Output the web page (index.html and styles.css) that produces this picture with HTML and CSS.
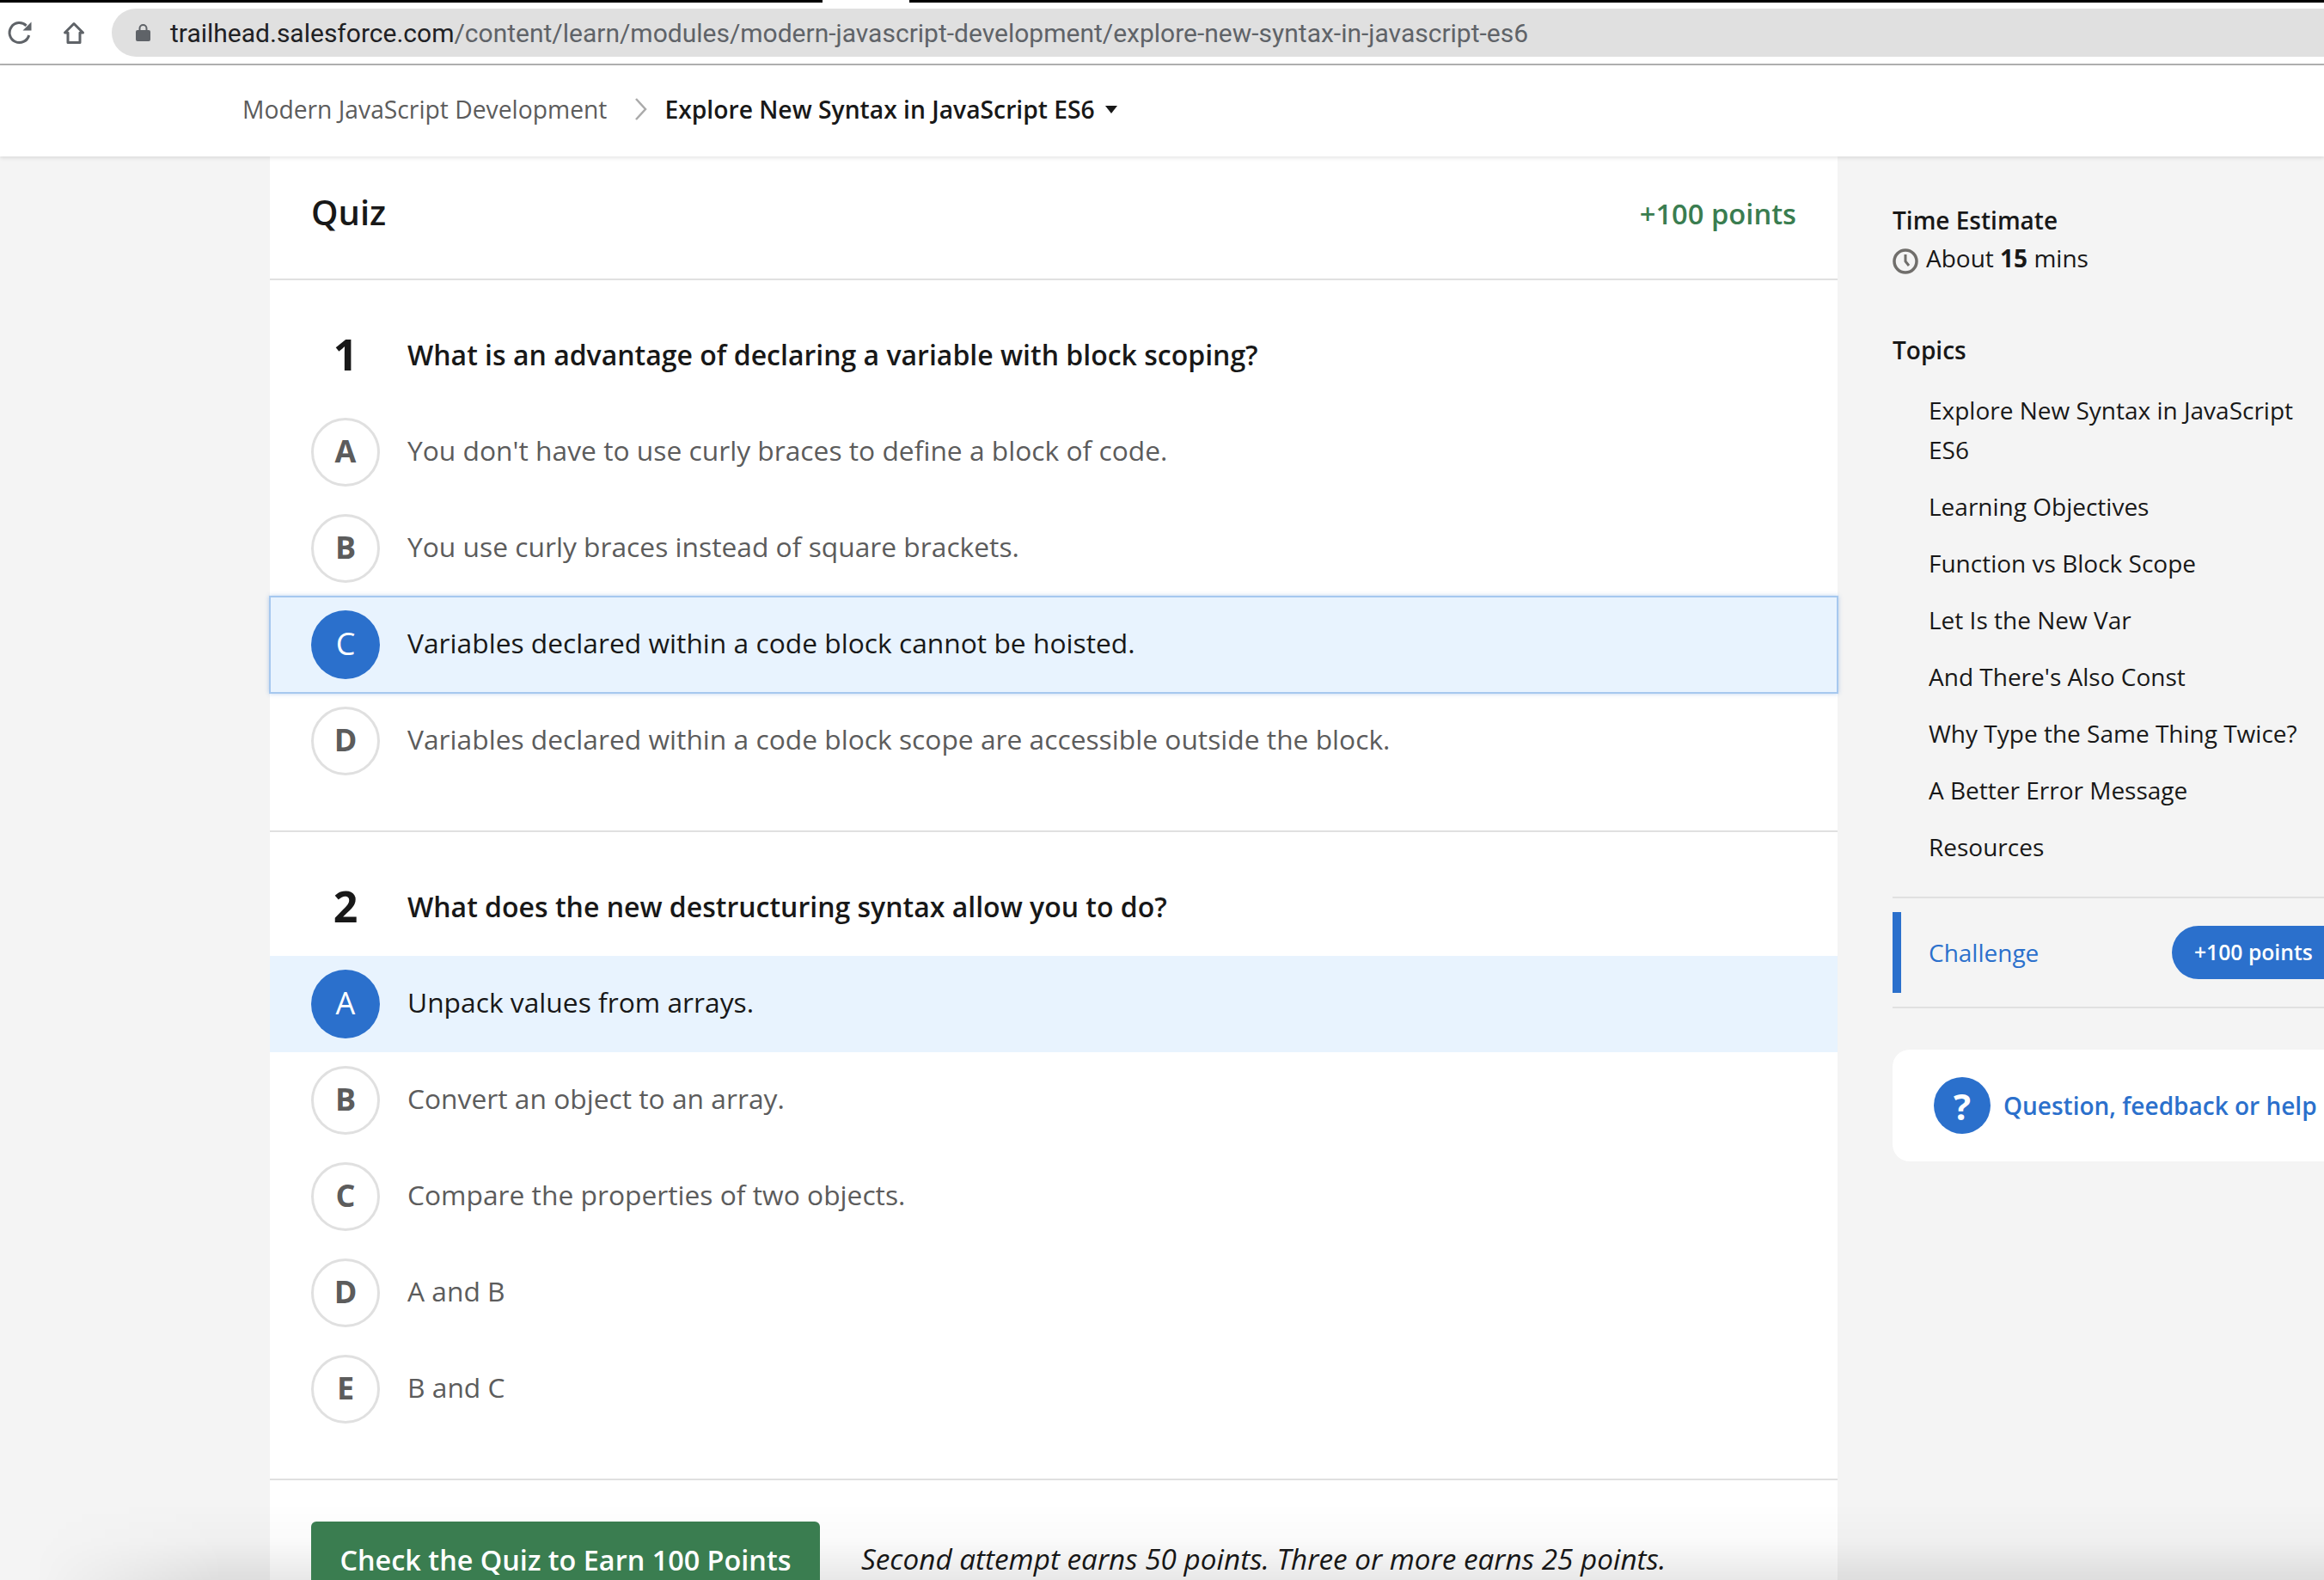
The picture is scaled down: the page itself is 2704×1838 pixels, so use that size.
FILE: index.html
```html
<!doctype html>
<html>
<head>
  <title>Explore New Syntax in JavaScript ES6</title>
  <link rel="stylesheet" href="styles.css">
</head>
<body>
  <div class="browser">
    <div class="tabstrip">
      <div class="tabstrip-left"></div>
      <div class="tabstrip-right"></div>
    </div>
    <div class="toolbar">
      <svg class="reload" width="30" height="30" viewBox="0 0 30 30" fill="none" stroke="#5f6368" stroke-width="3">
        <path d="M22.600 6.800A11.500 11.500 0 1 0 25.700 18"/>
        <path d="M28.500 2.500v10h-10z" fill="#5f6368" stroke="none"/>
      </svg>
      <svg class="home" width="30" height="30" viewBox="0 0 30 30" fill="none" stroke="#5f6368" stroke-width="3" stroke-linejoin="round">
        <path d="M14 4.500 3.500 15H7v11.500h14V15h3.500z"/>
      </svg>
      <div class="address">
        <svg class="lock" width="17" height="22" viewBox="0 0 17 22">
          <path d="M4.500 9V6a4 4 0 0 1 8 0v3" fill="none" stroke="#5f6368" stroke-width="2"/>
          <rect x="0" y="8" width="17" height="13" rx="2" fill="#5f6368"/>
        </svg>
        <span class="url"><b>trailhead.salesforce.com</b>/content/learn/modules/modern-javascript-development/explore-new-syntax-in-javascript-es6</span>
      </div>
    </div>
  </div>

  <div class="topnav">
    <span class="crumb">Modern JavaScript Development</span>
    <svg class="crumb-sep" width="15" height="26" viewBox="0 0 15 26" fill="none" stroke="#aaa" stroke-width="2.500">
      <path d="M2 1l11 12L2 25"/>
    </svg>
    <span class="crumb-current">Explore New Syntax in JavaScript ES6</span>
    <span class="caret"></span>
  </div>

  <div class="main">
    <div class="quiz">
      <div class="quiz-head">
        <h1>Quiz</h1>
        <span class="points">+100 points</span>
      </div>

      <div class="question first">
        <div class="question-title"><span class="num">1</span><span>What is an advantage of declaring a variable with block scoping?</span></div>
        <div class="answer"><span class="letter">A</span><span class="answer-text">You don't have to use curly braces to define a block of code.</span></div>
        <div class="answer"><span class="letter">B</span><span class="answer-text">You use curly braces instead of square brackets.</span></div>
        <div class="answer selected focused"><span class="letter">C</span><span class="answer-text">Variables declared within a code block cannot be hoisted.</span></div>
        <div class="answer"><span class="letter">D</span><span class="answer-text">Variables declared within a code block scope are accessible outside the block.</span></div>
      </div>

      <div class="question">
        <div class="question-title"><span class="num">2</span><span>What does the new destructuring syntax allow you to do?</span></div>
        <div class="answer selected"><span class="letter">A</span><span class="answer-text">Unpack values from arrays.</span></div>
        <div class="answer"><span class="letter">B</span><span class="answer-text">Convert an object to an array.</span></div>
        <div class="answer"><span class="letter">C</span><span class="answer-text">Compare the properties of two objects.</span></div>
        <div class="answer"><span class="letter">D</span><span class="answer-text">A and B</span></div>
        <div class="answer"><span class="letter">E</span><span class="answer-text">B and C</span></div>
      </div>

      <div class="quiz-foot">
        <div class="check-btn">Check the Quiz to Earn 100 Points</div>
        <em>Second attempt earns 50 points. Three or more earns 25 points.</em>
      </div>
    </div>

    <div class="side">
      <h3>Time Estimate</h3>
      <div class="estimate">
        <svg width="30" height="30" viewBox="0 0 30 30" fill="none" stroke="#706e6b">
          <circle cx="15" cy="15" r="13" stroke-width="3.500"/>
          <path d="M15 7v8l4 5" stroke-width="3"/>
        </svg>
        <span>About <b>15</b> mins</span>
      </div>

      <h3 class="topics-title">Topics</h3>
      <ul class="topics">
        <li>Explore New Syntax in JavaScript ES6</li>
        <li>Learning Objectives</li>
        <li>Function vs Block Scope</li>
        <li>Let Is the New Var</li>
        <li>And There's Also Const</li>
        <li>Why Type the Same Thing Twice?</li>
        <li>A Better Error Message</li>
        <li>Resources</li>
      </ul>

      <div class="challenge">
        <div class="challenge-inner">
          <span>Challenge</span>
          <span class="pill">+100 points</span>
        </div>
      </div>

      <div class="help">
        <span class="help-icon">?</span>
        <span class="help-text">Question, feedback or help</span>
      </div>
    </div>
  </div>

  <div class="window-shadow"></div>
</body>
</html>
```

FILE: styles.css
```css
* {
  box-sizing: border-box;
}

body {
  margin: 0;
  height: 1838px;
  overflow: hidden;
  position: relative;
  background: #f4f4f4;
  color: #181818;
  font-family: "Open Sans", "Noto Sans", sans-serif;
}

/* browser chrome */
.browser {
  height: 76px;
  background: #fff;
  border-bottom: 2px solid #b0b0b0;
}

.tabstrip {
  display: flex;
  justify-content: space-between;
  height: 3px;
}

.tabstrip-left {
  width: 957px;
  background: #000;
}

.tabstrip-right {
  width: 1646px;
  background: #000;
}

.toolbar {
  display: flex;
  align-items: center;
  height: 56px;
  margin-top: 7px;
}

.reload {
  margin-left: 8px;
}

.home {
  margin-left: 34px;
}

.address {
  flex: 1;
  display: flex;
  align-items: center;
  height: 56px;
  margin-left: 28px;
  padding-left: 28px;
  background: #e0e0e0;
  border-radius: 28px 0 0 28px;
}

.url {
  margin-left: 23px;
  font-family: Roboto, sans-serif;
  font-size: 30px;
  color: #5f6368;
}

.url b {
  font-weight: 400;
  color: #202124;
}

/* breadcrumb bar */
.topnav {
  display: flex;
  align-items: center;
  height: 106px;
  padding-left: 282px;
  padding-bottom: 4px;
  background: #fff;
  box-shadow: 0 2px 4px rgba(0, 0, 0, 0.1);
  position: relative;
  font-size: 28.250px;
}

.crumb {
  color: #5c5c5c;
}

.crumb-sep {
  margin: 0 20px 0 32px;
}

.crumb-current {
  font-weight: 600;
}

.caret {
  margin-left: 12px;
  border-top: 9px solid #181818;
  border-left: 7px solid transparent;
  border-right: 7px solid transparent;
}

/* quiz column */
.main {
  display: flex;
  padding-left: 314px;
}

.quiz {
  width: 1824px;
  height: 1656px;
  background: #fff;
}

.quiz-head {
  display: flex;
  justify-content: space-between;
  align-items: center;
  height: 144px;
  padding: 0 48px 10px;
  border-bottom: 2px solid #e0e0e0;
}

.quiz-head h1 {
  margin: 0 0 4px;
  font-size: 40px;
  font-weight: 600;
}

.points {
  font-size: 32.700px;
  font-weight: 600;
  color: #3a7d50;
}

.question {
  height: 754px;
  padding-top: 38px;
  border-bottom: 2px solid #e0e0e0;
}

.question.first {
  height: 642px;
}

.question-title {
  display: flex;
  align-items: center;
  height: 106px;
  padding-bottom: 10px;
  font-size: 32px;
  font-weight: 600;
}

.num {
  width: 176px;
  padding: 0 48px;
  margin-right: -16px;
  text-align: center;
  font-size: 50px;
  font-weight: 700;
}

.answer {
  display: flex;
  align-items: center;
  height: 112px;
  padding-left: 48px;
  font-size: 31.750px;
  color: #5c5c5c;
}

.answer-text {
  padding-bottom: 5px;
}

.letter {
  display: flex;
  align-items: center;
  justify-content: center;
  width: 80px;
  height: 80px;
  margin-right: 32px;
  padding-bottom: 3px;
  border: 3px solid #e0e0e0;
  border-radius: 50%;
  background: #fff;
  font-size: 36px;
  font-weight: 700;
}

.selected {
  background: #e8f3fe;
  color: #181818;
}

.focused {
  box-shadow: 0 0 0 1px #a6c8ef, inset 0 0 0 1px #a6c8ef, 0 0 5px 1px rgba(43, 112, 204, 0.3);
  position: relative;
}

.selected .letter {
  border: 0;
  background: #2b70cc;
  color: #fff;
  font-weight: 400;
}

.quiz-foot {
  display: flex;
  align-items: flex-start;
  padding: 48px 48px 0;
}

.check-btn {
  display: flex;
  align-items: center;
  justify-content: center;
  width: 592px;
  height: 90px;
  padding-bottom: 3px;
  flex: none;
  position: relative;
  z-index: 2;
  border-radius: 6px;
  background: #3a7d50;
  color: #fff;
  font-size: 32.400px;
  font-weight: 600;
}

.quiz-foot em {
  margin: 20px 0 0 48px;
  font-size: 33.300px;
}

/* right column */
.side {
  width: 566px;
  flex: none;
  padding-left: 64px;
  font-size: 28px;
}

.side h3 {
  margin: 0;
  font-size: 28px;
  font-weight: 600;
  line-height: 46px;
}

.side > h3:first-child {
  margin-top: 51px;
}

.estimate {
  display: flex;
  align-items: flex-start;
  gap: 9px;
  line-height: 42px;
}

.estimate svg {
  margin-top: 10px;
}

.topics-title {
  margin-top: 63px !important;
}

.topics {
  list-style: none;
  margin: 24px 0 35px;
  padding: 0 0 0 42px;
}

.topics li {
  width: 440px;
  margin-bottom: 20px;
  line-height: 46px;
}

.challenge {
  padding: 16px 0;
  border-top: 2px solid #e0e0e0;
  border-bottom: 2px solid #e0e0e0;
}

.challenge-inner {
  display: flex;
  align-items: center;
  justify-content: space-between;
  height: 94px;
  padding-left: 32px;
  border-left: 10px solid #2b70cc;
  color: #2b70cc;
}

.pill {
  width: 178px;
  height: 62px;
  margin-right: -1px;
  padding-left: 26px;
  border-radius: 31px 0 0 31px;
  background: #2b70cc;
  color: #fff;
  font-size: 24.700px;
  font-weight: 600;
  line-height: 62px;
}

.help {
  display: flex;
  align-items: center;
  gap: 15px;
  height: 130px;
  margin-top: 48px;
  padding-left: 48px;
  border-radius: 20px 0 0 20px;
  background: #fff;
  color: #2b70cc;
  font-weight: 600;
}

.help-icon {
  display: flex;
  align-items: center;
  justify-content: center;
  width: 66px;
  height: 66px;
  border-radius: 50%;
  background: #2b70cc;
  color: #fff;
  font-size: 42px;
  font-weight: 700;
}

.help-text {
  white-space: nowrap;
}

/* shadow of the window below, lies over the page */
.window-shadow {
  position: absolute;
  left: 0;
  right: 0;
  bottom: 0;
  height: 90px;
  background: linear-gradient(to bottom, rgba(0, 0, 0, 0), rgba(0, 0, 0, 0.02) 50%, rgba(0, 0, 0, 0.09));
  -webkit-mask-image: linear-gradient(to right, transparent 40px, #000 260px);
  mask-image: linear-gradient(to right, transparent 40px, #000 260px);
  pointer-events: none;
}
```
